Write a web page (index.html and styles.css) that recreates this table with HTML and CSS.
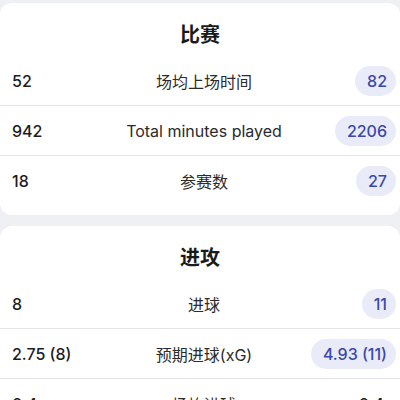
FILE: index.html
```html
<!DOCTYPE html>
<html lang="zh">
<head>
    <meta charset="UTF-8">
    <meta name="viewport" content="width=device-width, initial-scale=1.0">
    <title>球员对比</title>
    <link rel="stylesheet" href="styles.css">
</head>
<body>
    <!-- 比赛 -->
    <section class="card">
        <h2 class="card-title">比赛</h2>
        <div class="row">
            <span class="val left">52</span>
            <span class="label">场均上场时间</span>
            <span class="val right"><span class="pill">82</span></span>
        </div>
        <div class="row">
            <span class="val left">942</span>
            <span class="label">Total minutes played</span>
            <span class="val right"><span class="pill">2206</span></span>
        </div>
        <div class="row">
            <span class="val left">18</span>
            <span class="label">参赛数</span>
            <span class="val right"><span class="pill">27</span></span>
        </div>
    </section>

    <!-- 进攻 -->
    <section class="card">
        <h2 class="card-title">进攻</h2>
        <div class="row">
            <span class="val left">8</span>
            <span class="label">进球</span>
            <span class="val right"><span class="pill">11</span></span>
        </div>
        <div class="row">
            <span class="val left">2.75 (8)</span>
            <span class="label">预期进球(xG)</span>
            <span class="val right"><span class="pill">4.93 (11)</span></span>
        </div>
        <div class="row">
            <span class="val left">0.4</span>
            <span class="label">场均进球</span>
            <span class="val right"><span class="plain">0.4</span></span>
        </div>
    </section>
</body>
</html>
```

FILE: styles.css
```css
body {
    margin: 0;
    padding-top: 3px;
    background-color: #eef0f4; /* lichtgrijze achtergrond */
    font-family: Inter, "Noto Sans CJK SC", sans-serif;
    color: #1c1c1e;
}
.card {
    background: #ffffff;
    border-radius: 12px;
    padding-bottom: 10px;
    margin-bottom: 11px;
}
.card-title {
    margin: 0;
    padding: 20px 0 9px;
    font-size: 20px;
    line-height: 24px;
    font-weight: 700;
    text-align: center;
    color: #1a1a1a;
}
.row {
    display: grid;
    grid-template-columns: 1fr auto 1fr;
    align-items: center;
    height: 49px;
    padding: 0 4px 0 12px;
}
.row + .row {
    border-top: 1px solid #e4e4e6;
}
.val {
    font-size: 16px;
    font-weight: 500;
}
.left {
    text-align: left;
    color: #1c1c1e;
}
.right {
    text-align: right;
}
.label {
    font-size: 16px;
    color: #2b2b2b;
    text-align: center;
}
.pill {
    display: inline-block;
    height: 30px;
    line-height: 30px;
    padding: 0 9px 0 12px;
    border-radius: 15px;
    background-color: #e9ebf9;
    color: #3a48a8;
    font-weight: 500;
}
.plain {
    display: inline-block;
    padding-right: 12px;
}
```
